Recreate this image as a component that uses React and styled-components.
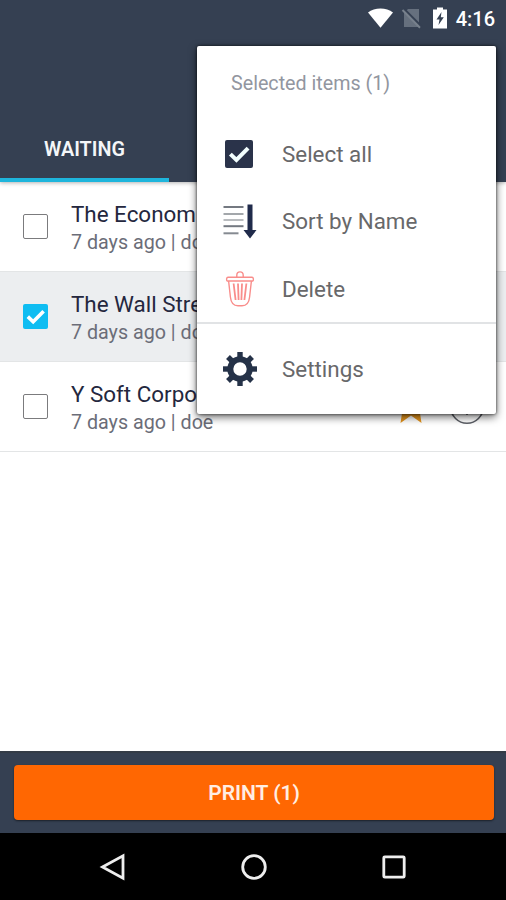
import React, { useState } from 'react';
import styled, { createGlobalStyle } from 'styled-components';

const documents = [
    { id: 1, title: 'The Economist', info: '7 days ago | doe' },
    { id: 2, title: 'The Wall Street Journal', info: '7 days ago | doe' },
    { id: 3, title: 'Y Soft Corporation', info: '7 days ago | doe' },
];

/* Icons ---------------------------*/
const StatusIcons = () => (
    <svg width="82" height="24" viewBox="0 0 82 24">
        <path d="M1 5.5 C7.5 0 19.5 0 26 5.5 L13.5 20.8 Z" fill="#fff" />
        <path d="M41 2 H52 V20 H37 V6 Z" fill="#66707e" />
        <path d="M36.5 1.5 L55 20" stroke="#354052" strokeWidth="2.4" />
        <path d="M35.5 3 L53 20.8" stroke="#77808c" strokeWidth="2" />
        <path d="M70 0.5 H76 V2.5 H80 V21.5 H66 V2.5 H70 Z" fill="#fff" />
        <path d="M74.5 5 L69.5 12.5 H72.5 L71.5 18 L76.8 10.2 H73.8 Z" fill="#354052" />
    </svg>
);

const Check = ({ color = '#fff', size = 25 }) => (
    <svg width={ size } height={ size } viewBox="0 0 25 25">
        <path d="M4.8 12.6 L10.2 17.8 L20.6 7.2" fill="none" stroke={ color } strokeWidth="3.6" />
    </svg>
);

const SortIcon = () => (
    <svg width="34" height="36" viewBox="0 0 34 36">
        <g strokeWidth="2">
            <path d="M0.5 4 H20.5" stroke="#747981" />
            <path d="M0.5 11 H20.5" stroke="#a3a7ab" />
            <path d="M0.5 17 H20.5" stroke="#b9bcbf" />
            <path d="M0.5 23.2 H20.5" stroke="#747981" />
            <path d="M0.5 30.3 H15.5" stroke="#858a91" />
        </g>
        <path d="M24.5 1.5 H29.5 V27 H33.5 L27 35.5 L20.5 27 H24.5 Z" fill="#202b4b" />
    </svg>
);

const TrashIcon = () => (
    <svg width="30" height="36" viewBox="0 0 30 36" fill="none" stroke="#f98d8b" strokeWidth="1.4">
        <path d="M11.8 6 V4.3 C11.8 -0.3 18.2 -0.3 18.2 4.3 V6" />
        <path d="M3 6.2 H27 C28.6 6.2 28.8 9.5 27.8 10 H2.2 C1.2 9.5 1.4 6.2 3 6.2 Z" />
        <path d="M3.6 10 L5.4 26 C6 32 9 34.8 13 34.8 H17 C21 34.8 24 32 24.6 26 L26.4 10" />
        <path d="M8.6 12.5 L10.6 29 M13 12.5 L13.6 29 M17 12.5 L16.4 29 M21.4 12.5 L19.4 29" strokeWidth="1.8" />
    </svg>
);

const GearIcon = () => (
    <svg width="36" height="36" viewBox="-18 -18 36 36" fill="#253248">
        { [0, 45, 90, 135, 180, 225, 270, 315].map(angle => (
            <path key={ angle } d="M-2.7 -10 V-17 H2.7 V-10 Z" transform={ `rotate(${angle})` } />
        )) }
        <circle r="9.7" fill="none" stroke="#253248" strokeWidth="6" />
    </svg>
);

const StarIcon = () => (
    <svg width="34" height="33" viewBox="0 0 34 33">
        <path d="M17 0 L21 12 H34 L25.5 20 L27.5 33 L17 25.5 L6.5 33 L8.5 20 L0 12 H13 Z" fill="#e5941c" />
    </svg>
);

const InfoIcon = () => (
    <svg width="34" height="34" viewBox="0 0 34 34" fill="none" stroke="#5c5f66" strokeWidth="1.6">
        <circle cx="17" cy="17" r="16.2" />
        <path d="M17 15 V25 M17 9 V11.5" />
    </svg>
);

/* Components ---------------------------*/
const App = () => {

    const [selected, selectedUpdate] = useState([2]);

    const handleToggle = (id) => {
        selectedUpdate(selected.includes(id)
            ? selected.filter(item => item !== id)
            : [...selected, id]);
    }

    return (
        <Screen>
            <GlobalStyle />
            <Header>
                <StatusBar>
                    <StatusIcons />
                    <span>4:16</span>
                </StatusBar>
                <Tab>WAITING</Tab>
            </Header>

            <List>
                { documents.map(doc => (
                    <Row
                        key={ doc.id }
                        $selected={ selected.includes(doc.id) }
                        onClick={ () => handleToggle(doc.id) }
                    >
                        <Checkbox $checked={ selected.includes(doc.id) }>
                            { selected.includes(doc.id) && <Check /> }
                        </Checkbox>
                        <RowText>
                            <h3>{ doc.title }</h3>
                            <p>{ doc.info }</p>
                        </RowText>
                        <StarIcon />
                        <InfoIcon />
                    </Row>
                )) }
            </List>

            <Footer>
                <PrintButton>{ `PRINT (${selected.length})` }</PrintButton>
            </Footer>

            <NavBar>
                <svg width="28" height="28" viewBox="0 0 28 28"><path d="M3.5 14 L24 2.8 V25.2 Z" /></svg>
                <svg width="28" height="28" viewBox="0 0 28 28"><circle cx="14" cy="14" r="11.3" /></svg>
                <svg width="28" height="28" viewBox="0 0 28 28"><rect x="3.8" y="3.8" width="20.4" height="20.4" rx="1" /></svg>
            </NavBar>

            <Menu>
                <MenuHeader>{ `Selected items (${selected.length})` }</MenuHeader>
                <MenuItem>
                    <MenuIcon><DarkBox><Check size={ 28 } color="#f3ffff" /></DarkBox></MenuIcon>
                    Select all
                </MenuItem>
                <MenuItem>
                    <MenuIcon><SortIcon /></MenuIcon>
                    Sort by Name
                </MenuItem>
                <MenuItem>
                    <MenuIcon><TrashIcon /></MenuIcon>
                    Delete
                </MenuItem>
                <Divider />
                <MenuItem $last>
                    <MenuIcon><GearIcon /></MenuIcon>
                    Settings
                </MenuItem>
            </Menu>
        </Screen>
    );
}

export default App;

const GlobalStyle = createGlobalStyle`
    * {
        box-sizing: border-box;
    }

    body {
        margin: 0;
        font-family: Roboto, "Liberation Sans", sans-serif;
    }

    svg {
        display: block;
        flex-shrink: 0;
    }
`;

const Screen = styled.div`
    position: relative;
    display: flex;
    flex-direction: column;
    width: 506px;
    height: 900px;
    overflow: hidden;
    background: #fff;
`;

const Header = styled.header`
    display: flex;
    flex-direction: column;
    justify-content: space-between;
    height: 182px;
    background: #354052;
    box-shadow: 0 1px 4px rgba(0,0,0, .3);
    z-index: 1;
`;

const StatusBar = styled.div`
    display: flex;
    align-items: center;
    justify-content: flex-end;
    gap: 7px;
    height: 38px;
    padding-right: 11px;
    color: #fff;
    font-size: 20px;
    font-weight: 500;
`;

const Tab = styled.div`
    width: 169px;
    height: 66px;
    border-bottom: 4px solid #1eb5dc;
    color: #f4f6f8;
    font-size: 19.8px;
    font-weight: 600;
    line-height: 67px;
    text-align: center;
`;

const List = styled.div`
    flex: 1;
`;

const Row = styled.div`
    display: flex;
    align-items: center;
    height: 90px;
    padding: 0 22px 0 23px;
    border-bottom: 1px solid #e3e5e6;
    background: ${props => props.$selected ? '#eceef0' : '#fff'};

    > svg:last-child {
        margin-left: 22px;
    }
`;

const Checkbox = styled.div`
    width: 25px;
    height: 25px;
    margin-right: 23px;
    border: ${props => props.$checked ? 'none' : '1.5px solid #7b7b7d'};
    border-radius: 2px;
    background: ${props => props.$checked ? '#0fbdf2' : '#fff'};
`;

const RowText = styled.div`
    flex: 1;
    padding-top: 4px;
    white-space: nowrap;

    h3 {
        margin: 0;
        color: #24273e;
        font-size: 22.4px;
        font-weight: 400;
        line-height: 28px;
    }

    p {
        margin: 0;
        color: #6b6d78;
        font-size: 19.7px;
        line-height: 29px;
    }
`;

const Footer = styled.div`
    height: 82px;
    padding: 14px 12px 13px 14px;
    border-top: 2px solid #343c47;
    background: #354052;
`;

const PrintButton = styled.button`
    display: block;
    width: 100%;
    height: 55px;
    margin-top: -2px;
    padding: 0;
    border: none;
    border-radius: 4px;
    background: #ff6702;
    box-shadow: 0 1px 2px rgba(0,0,0, .5);
    color: #ffeee3;
    font-family: inherit;
    font-size: 21px;
    font-weight: 600;
`;

const NavBar = styled.div`
    display: flex;
    align-items: center;
    justify-content: space-between;
    height: 67px;
    padding: 0 98px 0 99px;
    background: #000;

    svg {
        fill: none;
        stroke: #eee;
        stroke-width: 2.8;
    }
`;

const Menu = styled.div`
    position: absolute;
    top: 46px;
    left: 197px;
    z-index: 2;
    width: 299px;
    height: 368px;
    border-radius: 2px;
    background: #fff;
    box-shadow: 0 3px 8px rgba(0,0,0, .6), 0 0 3px rgba(0,0,0, .7);
`;

const MenuHeader = styled.div`
    height: 74px;
    padding-left: 34px;
    color: #9296a0;
    font-size: 19.7px;
    line-height: 76px;
`;

const MenuItem = styled.div`
    display: flex;
    align-items: center;
    height: ${props => props.$last ? '91px' : '67.5px'};
    color: #68686a;
    font-size: 22.4px;
`;

const MenuIcon = styled.div`
    display: flex;
    justify-content: center;
    width: 85px;
`;

const DarkBox = styled.div`
    width: 28px;
    height: 28px;
    margin-right: 1px;
    border-radius: 2px;
    background: #2a334a;
`;

const Divider = styled.div`
    height: 2px;
    margin-top: -1px;
    background: #e1e3e5;
`;
